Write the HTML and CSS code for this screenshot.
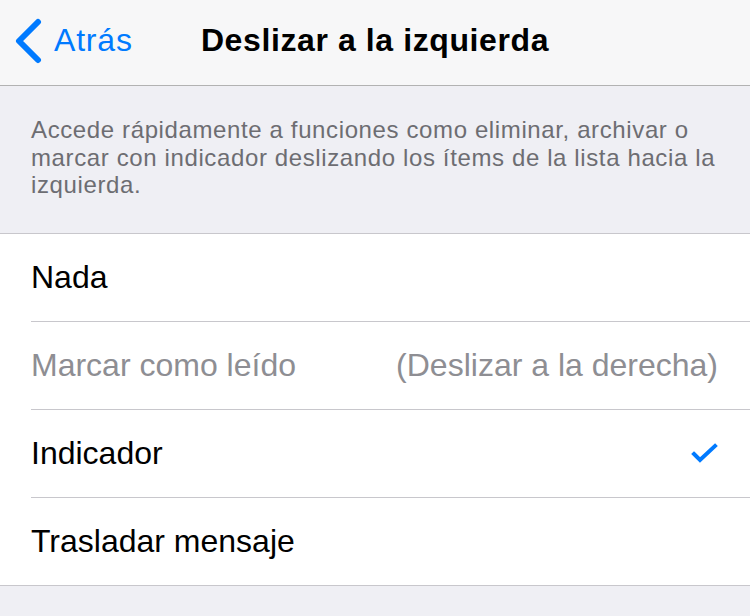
FILE: index.html
```html
<!DOCTYPE html>
<html>
<head>
  <meta charset="UTF-8">
  <title>Deslizar a la izquierda</title>
  <meta name="viewport" content="width=device-width,initial-scale=1.0">
  <link rel="stylesheet" href="styles.css">
</head>
<body>
  <div class="navbar">
    <div class="back">
      <svg class="chevron" width="30" height="46" viewBox="0 0 30 46">
        <polyline points="24,4 5,23 24,42" fill="none" stroke="#007aff" stroke-width="6" stroke-linecap="round" stroke-linejoin="round"/>
      </svg>
      <span>Atrás</span>
    </div>
    <div class="title">Deslizar a la izquierda</div>
  </div>

  <div class="note">
    Accede rápidamente a funciones como eliminar, archivar o marcar con indicador deslizando los ítems de la lista hacia la izquierda.
  </div>

  <div class="list">
    <div class="row"><div class="cell"><span>Nada</span></div></div>
    <div class="row"><div class="cell disabled"><span>Marcar como leído</span><span class="hint">(Deslizar a la derecha)</span></div></div>
    <div class="row"><div class="cell"><span>Indicador</span>
      <svg class="check" width="28" height="22" viewBox="0 0 28 22">
        <polyline points="3,11 9,17 24,3" fill="none" stroke="#007aff" stroke-width="4" stroke-linecap="square" stroke-linejoin="miter"/>
      </svg>
    </div></div>
    <div class="row"><div class="cell"><span>Trasladar mensaje</span></div></div>
  </div>
</body>
</html>
```

FILE: styles.css
```css
body{margin:0;background:#efeff4;font-family:"Liberation Sans",Arial,sans-serif;color:#000;}

/* nav bar */
.navbar{
  height:85px;background:#f7f7f8;border-bottom:1px solid #b2b2b2;
  display:flex;align-items:center;justify-content:center;position:relative;
}
.back{
  position:absolute;left:14px;top:0;height:85px;
  display:flex;align-items:center;color:#007aff;font-size:32px;letter-spacing:0.8px;
}
.back span{margin-left:10px;margin-top:-4px;}
.chevron{margin-top:-4px;}
.title{font-size:32px;font-weight:bold;margin-top:-4px;letter-spacing:0.6px;}

/* explanation */
.note{
  height:147px;box-sizing:border-box;
  padding:30px 30px 0 31px;
  font-size:24px;line-height:27.5px;color:#6d6d72;letter-spacing:0.62px;
}

/* list */
.list{background:#fff;border-top:1px solid #c8c7cc;border-bottom:1px solid #c8c7cc;}
.row{padding-left:31px;}
.cell{
  height:87px;display:flex;align-items:center;justify-content:space-between;
  padding-right:32px;font-size:32px;border-bottom:1px solid #c8c7cc;
}
.row:last-child .cell{border-bottom:none;}
.cell span{margin-top:-1px;}
.disabled{color:#8e8e93;}
.hint{color:#8e8e93;}
.check{margin-right:-1px;}
```
